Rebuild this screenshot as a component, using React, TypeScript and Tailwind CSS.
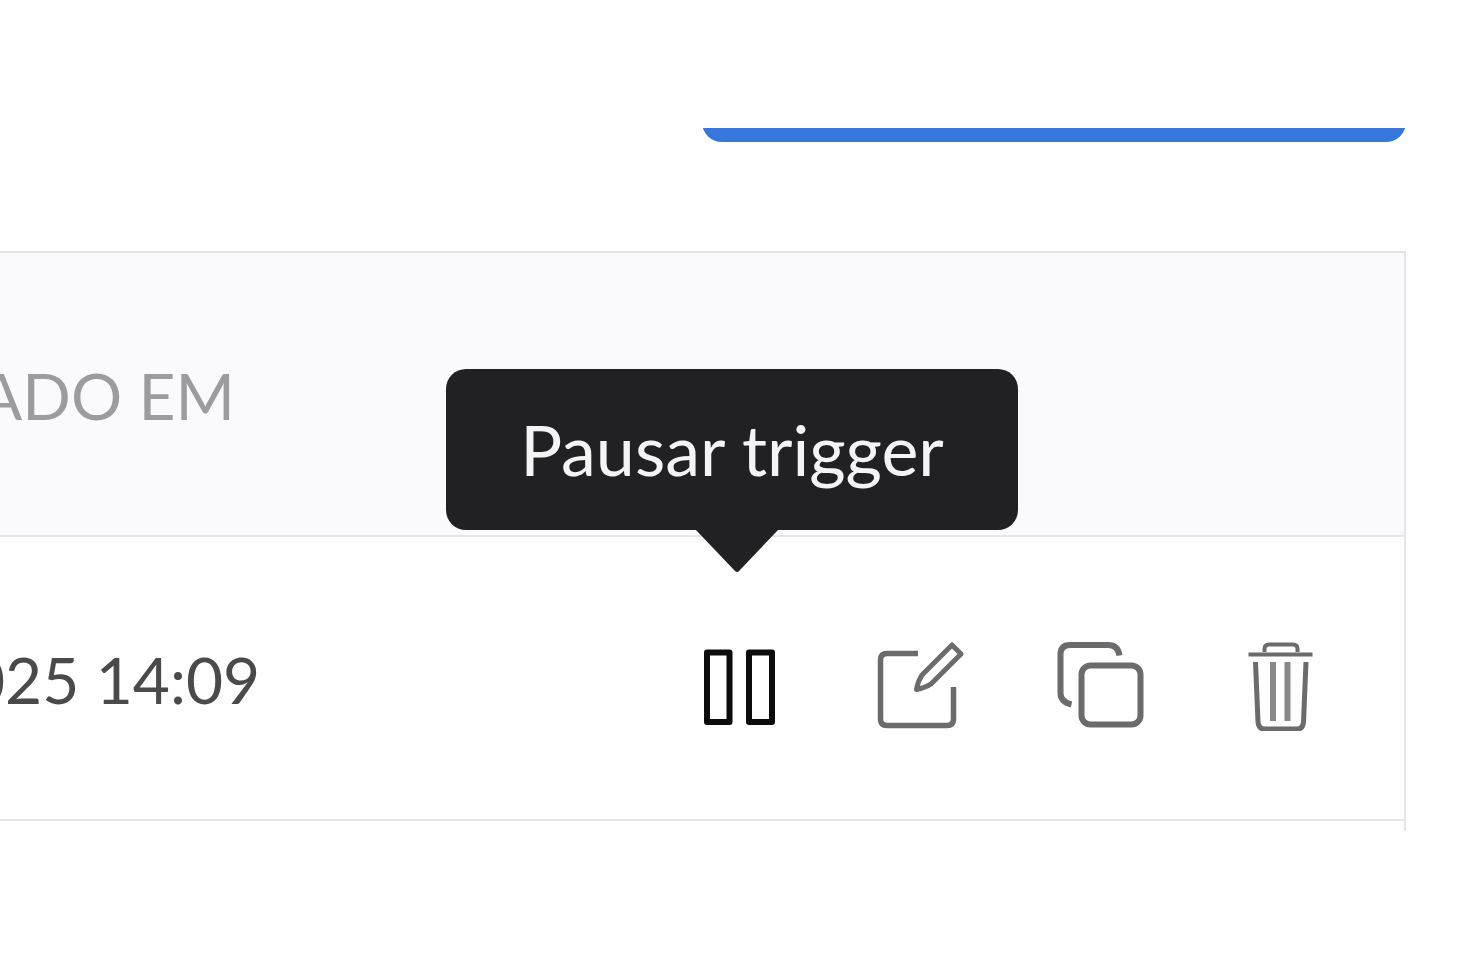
import React from 'react';

function PauseIcon() {
  return (
    <svg viewBox="0 0 90 90" className="size-[90px]" fill="none" stroke="currentColor" strokeWidth="6" strokeLinejoin="round">
      <rect x="12" y="11.5" width="22.5" height="69.5" />
      <rect x="54" y="11.5" width="23" height="69.5" />
    </svg>
  );
}

function EditIcon() {
  return (
    <svg viewBox="0 0 90 90" className="size-[90px]" fill="none" stroke="currentColor" strokeWidth="5.5" strokeLinejoin="round">
      <path d="M43 12.5H12Q5.5 12.5 5.5 19V78Q5.5 84.5 12 84.5H72Q78.5 84.5 78.5 78V46" />
      <path d="M77 4L86 13L56 43Q50 47 41.5 48.5Q42.5 41 47 34Z" strokeWidth="5" />
    </svg>
  );
}

function CopyIcon() {
  return (
    <svg viewBox="0 0 90 90" className="size-[90px]" fill="none" stroke="currentColor" strokeWidth="6">
      <rect x="26.5" y="24.5" width="59" height="59" rx="9" />
      <path d="M64.5 14.5Q63 4 53 4H15Q5.5 4 5.5 13.5V52Q5.5 61 16.5 63.5" />
    </svg>
  );
}

function TrashIcon() {
  return (
    <svg viewBox="0 0 90 90" className="size-[90px]" fill="none" stroke="currentColor" strokeWidth="4">
      <path d="M29.5 11V8Q29.5 3.5 34 3.5H58Q62.5 3.5 62.5 8V11" />
      <path d="M13.5 13.5H77.5" />
      <path d="M20.5 21L23 81Q23.5 88 30 88H62Q68 88 68.5 81L71 21" strokeWidth="5" />
      <path d="M38 21V80M52.5 21V80" strokeWidth="6" className="opacity-80" />
    </svg>
  );
}

const actions = [
  { label: 'Editar', icon: <EditIcon /> },
  { label: 'Duplicar', icon: <CopyIcon /> },
  { label: 'Excluir', icon: <TrashIcon /> },
];

function Tooltip({ text }: { text: string }) {
  return (
    <div
      role="tooltip"
      className="absolute bottom-[201px] -left-[249px] w-[572px] rounded-[20px] bg-[#212123] py-8 text-center text-[70px] leading-[97px] whitespace-nowrap text-[#f4f4f4]"
    >
      {text}
      <svg viewBox="0 0 84 44" className="absolute top-full left-[249px] -mt-px h-11 w-[84px]" fill="#212123">
        <path d="M0 0H84L44 42Q42 44 40 42Z" />
      </svg>
    </div>
  );
}

export default function App() {
  return (
    <main className="min-h-screen overflow-hidden bg-[#fefefe] pt-32 pr-[54px] font-[Lato,sans-serif]">
      {/* toolbar scrolled out of view, only the foot of the button remains */}
      <div className="flex h-[14px] items-end justify-end overflow-hidden">
        <button type="button" aria-label="Novo trigger" className="h-24 w-[704px] shrink-0 rounded-[20px] bg-[#3777db]" />
      </div>

      <table className="mt-[109px] w-full table-fixed border-separate border-spacing-0 border-t-2 border-r-2 border-[#e6e6e8]">
        <thead>
          <tr className="h-[284px] bg-[#fafafc]">
            <th className="w-[446px] border-b-2 border-[#e6e6e8] p-0 pt-1 text-left text-[64px] font-normal text-[#9c9c9e]">
              <div className="overflow-hidden -indent-[21px] whitespace-nowrap">ADO EM</div>
            </th>
            <th className="border-b-2 border-[#e6e6e8] p-0" />
          </tr>
        </thead>
        <tbody>
          <tr className="h-[284px]">
            <td className="border-b-2 border-[#e6e6e8] p-0 pt-1 text-[64px] text-[#4a4a4a]">
              <div className="overflow-hidden -indent-8 whitespace-nowrap">025 14:09</div>
            </td>
            <td className="border-b-2 border-[#e6e6e8] p-0 pt-4 pr-[79px]">
              <div className="flex items-center justify-end gap-[90px] text-[#6b6b6d]">
                <div className="relative">
                  <button type="button" aria-label="Pausar trigger" className="block text-[#0c0c0c]">
                    <PauseIcon />
                  </button>
                  <Tooltip text="Pausar trigger" />
                </div>
                {actions.map((action) => (
                  <button key={action.label} type="button" aria-label={action.label} className="block">
                    {action.icon}
                  </button>
                ))}
              </div>
            </td>
          </tr>
          <tr className="h-[10px]">
            <td className="p-0" />
            <td className="p-0" />
          </tr>
        </tbody>
      </table>
    </main>
  );
}
